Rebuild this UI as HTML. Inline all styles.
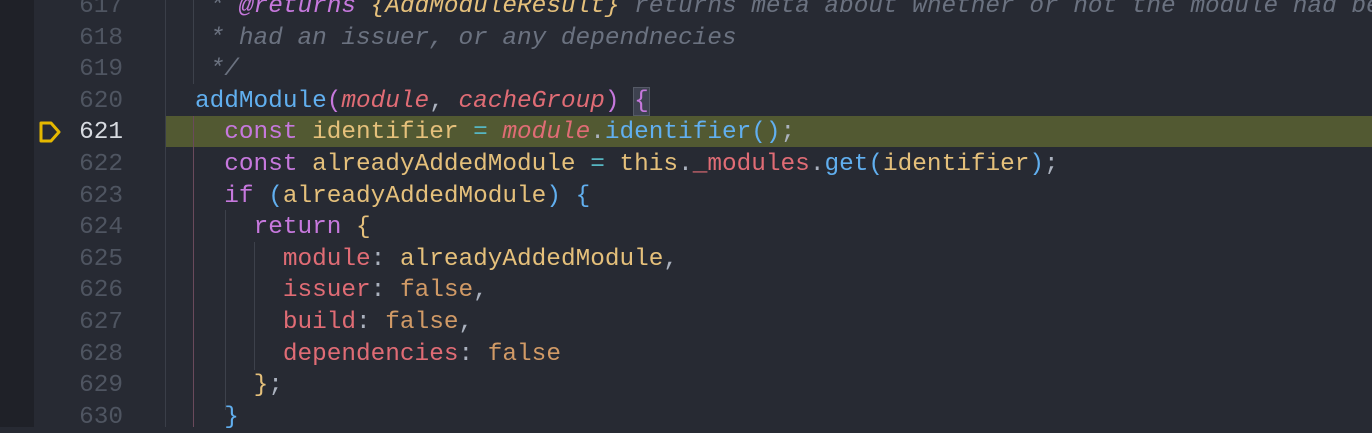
<!DOCTYPE html>
<html><head><meta charset="utf-8"><style>
html,body{margin:0;padding:0;width:1372px;height:427px;overflow:hidden;background:#272a33;}
.gut{position:absolute;left:0;top:0;width:34px;height:427px;background:#1f2128;}
.gb{position:absolute;left:165px;top:0;width:1px;height:427px;background:#3a3e48;}
.g1{position:absolute;left:193px;top:0;width:1px;height:84px;background:#3d414b;}
.g2{position:absolute;left:193px;top:116px;width:1px;height:311px;background:#6a4a5c;}
.g3{position:absolute;left:225px;top:210px;width:1px;height:200px;background:#3d414b;}
.g4{position:absolute;left:254px;top:242px;width:1px;height:128px;background:#3d414b;}
.hl{position:absolute;left:166px;top:116px;width:1206px;height:31px;background:#525932;}
.code{position:absolute;left:0;top:-9px;width:1372px;font-family:"Liberation Mono",monospace;font-size:24.4px;line-height:31.6px;}
.l{height:31.6px;position:relative;}
.n{position:absolute;left:0;width:123px;text-align:right;color:#4f5561;}
.t{position:absolute;left:195px;color:#abb2bf;white-space:pre;}
.c{color:#6b7280;font-style:italic}
.k{color:#c678dd}.f{color:#61afef}.p{color:#e06c75;font-style:italic}.v{color:#e5c07b}.r{color:#e06c75}.y{color:#e5c07b}.o{color:#56b6c2}.b{color:#d19a66}
.br{color:#e5c07b}
.bp{color:#c678dd;background:#3e4250;outline:1px solid #555a66}
</style></head><body>
<div class="gut"></div><div class="hl"></div><div class="gb"></div><div class="g1"></div><div class="g2"></div><div class="g3"></div><div class="g4"></div>
<svg style="position:absolute;left:38px;top:120px" width="26" height="24"><path d="M3 3 H13 L21 12 L13 21 H3 Z" fill="none" stroke="#e5b800" stroke-width="3" stroke-linejoin="round"/></svg>
<div class="code"><div class="l"><span class="n">617</span><span class="t c"> * <span style="color:#c678dd">@returns</span> <span style="color:#e5c07b">{AddModuleResult}</span> returns meta about whether or not the module had been</span></div><div class="l"><span class="n">618</span><span class="t c"> * had an issuer, or any dependnecies</span></div><div class="l"><span class="n">619</span><span class="t c"> */</span></div><div class="l"><span class="n">620</span><span class="t"><span class="f">addModule</span><span class="k">(</span><span class="p">module</span>, <span class="p">cacheGroup</span><span class="k">)</span> <span class="bp">{</span></span></div><div class="l"><span class="n" style="color:#d7dae0">621</span><span class="t">  <span class="k">const</span> <span class="v">identifier</span> <span class="o">=</span> <span class="p">module</span>.<span class="f">identifier()</span>;</span></div><div class="l"><span class="n">622</span><span class="t">  <span class="k">const</span> <span class="v">alreadyAddedModule</span> <span class="o">=</span> <span class="y">this</span>.<span class="r">_modules</span>.<span class="f">get(</span><span class="y">identifier</span><span class="f">)</span>;</span></div><div class="l"><span class="n">623</span><span class="t">  <span class="k">if</span> <span class="f">(</span><span class="y">alreadyAddedModule</span><span class="f">)</span> <span class="f">{</span></span></div><div class="l"><span class="n">624</span><span class="t">    <span class="k">return</span> <span class="br">{</span></span></div><div class="l"><span class="n">625</span><span class="t">      <span class="r">module</span>: <span class="y">alreadyAddedModule</span>,</span></div><div class="l"><span class="n">626</span><span class="t">      <span class="r">issuer</span>: <span class="b">false</span>,</span></div><div class="l"><span class="n">627</span><span class="t">      <span class="r">build</span>: <span class="b">false</span>,</span></div><div class="l"><span class="n">628</span><span class="t">      <span class="r">dependencies</span>: <span class="b">false</span></span></div><div class="l"><span class="n">629</span><span class="t">    <span class="br">}</span>;</span></div><div class="l"><span class="n">630</span><span class="t">  <span class="f">}</span></span></div></div>
</body></html>
